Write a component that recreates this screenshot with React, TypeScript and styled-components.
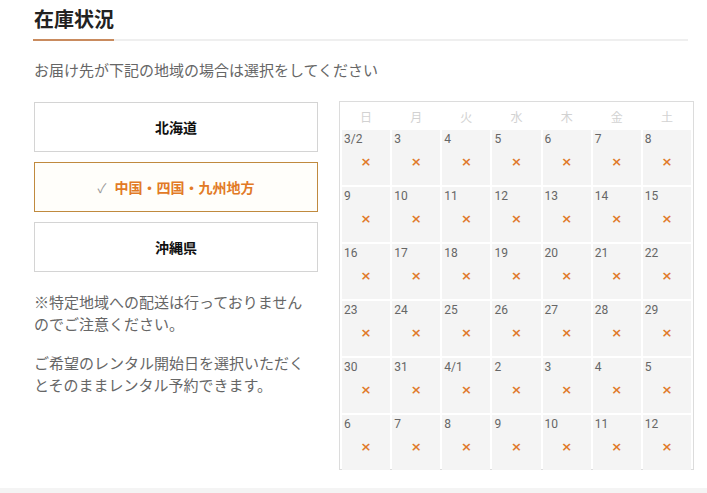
import React from "react";
import styled, { createGlobalStyle } from "styled-components";

const Global = createGlobalStyle`
  html, body { margin: 0; padding: 0; background: #fff; }
  body { font-family: Roboto, "Noto Sans CJK JP", "Noto Sans", sans-serif; color: #333; }
`;

const Page = styled.div`
  width: 707px;
  height: 493px;
  display: flex;
  flex-direction: column;
  overflow: hidden;
`;

const Section = styled.section`
  flex: 1;
  padding: 6px 0 0 33px;
`;

const Header = styled.div`
  width: 655px;
  border-bottom: 2px solid #efefef;
`;

const Title = styled.h2`
  display: inline-block;
  margin: 0 0 -2px;
  padding: 0 0 8px 1px;
  font-size: 20px;
  line-height: 25px;
  font-weight: 700;
  color: #222;
  border-bottom: 2px solid #c98b5e;
  font-family: "Noto Sans CJK JP", sans-serif;
`;

const Lead = styled.p`
  margin: 18px 0 0 1px;
  font-size: 15px;
  line-height: 22px;
  color: #666;
  font-family: "Noto Sans CJK JP", sans-serif;
`;

const Body = styled.div`
  display: flex;
  gap: 21px;
  margin-top: 20px;
  padding-left: 1px;
`;

const LeftCol = styled.div`
  width: 284px;
  display: flex;
  flex-direction: column;
`;

const Regions = styled.div`
  display: flex;
  flex-direction: column;
  gap: 10px;
  margin-top: 1px;
`;

const RegionButton = styled.button<{ $active?: boolean }>`
  height: 50px;
  width: 100%;
  display: flex;
  align-items: center;
  justify-content: center;
  gap: 8px;
  background: ${(p) => (p.$active ? "#fffefa" : "#fff")};
  border: 1px solid ${(p) => (p.$active ? "#c08a3e" : "#d4d4d4")};
  color: ${(p) => (p.$active ? "#e27a26" : "#111")};
  font-family: "Noto Sans CJK JP", sans-serif;
  font-size: 14px;
  font-weight: 700;
  padding: 0;
  cursor: pointer;
`;

const Check = styled.span`
  color: #999;
  font-weight: 400;
  font-size: 13px;
`;

const Note = styled.p`
  margin: 0;
  max-width: 276px;
  font-size: 15px;
  line-height: 22px;
  color: #666;
  font-family: "Noto Sans CJK JP", sans-serif;
  &:first-of-type { margin-top: 19px; }
  & + & { margin-top: 17px; }
`;

const Calendar = styled.div`
  width: 355px;
  height: 369px;
  box-sizing: border-box;
  border: 1px solid #dcdcdc;
  padding: 0 2px;
  display: grid;
  grid-template-columns: repeat(7, 1fr);
  grid-template-rows: 26px repeat(6, 55px);
  gap: 2px;
`;

const Weekday = styled.div`
  display: flex;
  align-items: center;
  justify-content: center;
  padding-top: 2px;
  font-size: 12px;
  color: #d2d2d2;
  font-family: "Noto Sans CJK JP", sans-serif;
`;

const Day = styled.div`
  background: #f4f4f4;
  display: flex;
  flex-direction: column;
  align-items: center;
`;

const DayNum = styled.span`
  align-self: flex-start;
  margin: 1px 0 0 2px;
  font-size: 12px;
  line-height: 16px;
  color: #666;
  font-family: Roboto, sans-serif;
`;

const Cross = styled.span`
  margin-top: 8px;
  font-size: 13px;
  font-weight: 700;
  line-height: 14px;
  color: #e07a2a;
  font-family: "DejaVu Sans", sans-serif;
`;

const Footer = styled.div`
  height: 5px;
  background: #f4f4f4;
`;

const weekdays = ["日", "月", "火", "水", "木", "金", "土"];
const days = [
  "3/2", "3", "4", "5", "6", "7", "8",
  "9", "10", "11", "12", "13", "14", "15",
  "16", "17", "18", "19", "20", "21", "22",
  "23", "24", "25", "26", "27", "28", "29",
  "30", "31", "4/1", "2", "3", "4", "5",
  "6", "7", "8", "9", "10", "11", "12",
];

export default function App() {
  return (
    <Page>
      <Global />
      <Section>
        <Header>
          <Title>在庫状況</Title>
        </Header>
        <Lead>お届け先が下記の地域の場合は選択をしてください</Lead>
        <Body>
          <LeftCol>
            <Regions>
              <RegionButton>北海道</RegionButton>
              <RegionButton $active>
                <Check>✓</Check>中国・四国・九州地方
              </RegionButton>
              <RegionButton>沖縄県</RegionButton>
            </Regions>
            <Note>※特定地域への配送は行っておりませんのでご注意ください。</Note>
            <Note>ご希望のレンタル開始日を選択いただくとそのままレンタル予約できます。</Note>
          </LeftCol>
          <Calendar>
            {weekdays.map((w) => (
              <Weekday key={w}>{w}</Weekday>
            ))}
            {days.map((d, i) => (
              <Day key={i}>
                <DayNum>{d}</DayNum>
                <Cross>×</Cross>
              </Day>
            ))}
          </Calendar>
        </Body>
      </Section>
      <Footer />
    </Page>
  );
}
